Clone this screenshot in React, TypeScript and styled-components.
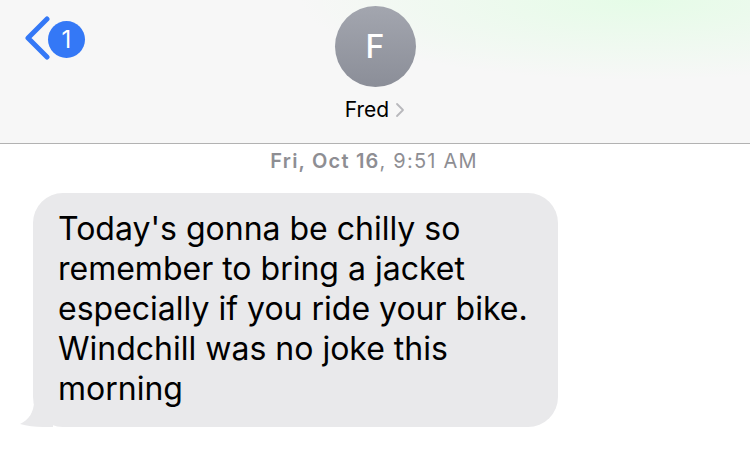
import React from "react";
import styled, { createGlobalStyle } from "styled-components";

const Global = createGlobalStyle`
  html, body { margin: 0; padding: 0; background: #ffffff; }
  body { font-family: Inter, "Liberation Sans", Arial, sans-serif; -webkit-font-smoothing: antialiased; }
  #root { width: 750px; height: 449px; overflow: hidden; }
`;

const Screen = styled.div`
  width: 750px;
  height: 449px;
  display: flex;
  flex-direction: column;
  background: #ffffff;
`;

const NavBar = styled.header`
  height: 144px;
  box-sizing: border-box;
  border-bottom: 1px solid #b2b2b2;
  background:
    radial-gradient(ellipse 340px 80px at 640px 0px, rgba(228, 252, 230, 0.95), rgba(240, 250, 241, 0) 100%),
    #f7f7f7;
  display: grid;
  grid-template-columns: 1fr auto 1fr;
  align-items: start;
`;

const BackButton = styled.div`
  display: flex;
  align-items: center;
  padding: 16px 0 0 24px;
`;

const Badge = styled.div`
  width: 37px;
  height: 37px;
  border-radius: 50%;
  background: #3478f6;
  color: #ffffff;
  font-size: 24px;
  line-height: 37px;
  text-align: center;
  margin-left: -2px;
  margin-top: 2px;
`;

const Contact = styled.div`
  display: flex;
  flex-direction: column;
  align-items: center;
  padding-top: 6px;
`;

const Avatar = styled.div`
  width: 81px;
  height: 81px;
  border-radius: 50%;
  background: linear-gradient(180deg, #a3a6af 0%, #8b8e98 100%);
  color: #ffffff;
  font-size: 32px;
  font-weight: 500;
  display: flex;
  align-items: center;
  justify-content: center;
`;

const NameRow = styled.div`
  display: flex;
  align-items: center;
  gap: 6px;
  margin-top: 10px;
  font-size: 21px;
  color: #000000;
  line-height: 26px;
`;

const Thread = styled.main`
  display: flex;
  flex-direction: column;
  align-items: flex-start;
  padding: 5px 0 0 0;
`;

const Stamp = styled.div`
  align-self: center;
  font-size: 20px;
  letter-spacing: 1.2px;
  color: #8e8e93;
  line-height: 24px;
  margin-left: -2px;
  b { font-weight: 600; }
`;

const Bubble = styled.div`
  position: relative;
  margin: 20px 0 0 33px;
  width: 525px;
  box-sizing: border-box;
  padding: 16px 24px 18px 25px;
  background: #e9e9eb;
  border-radius: 30px;
  color: #000000;
  font-size: 32px;
  line-height: 40px;
`;

const Tail = styled.svg`
  position: absolute;
  left: -14px;
  bottom: 0;
`;

const Chevron = () => (
  <svg width="26" height="44" viewBox="0 0 26 44">
    <path d="M23 3 L4 22 L23 41" fill="none" stroke="#3478f6" strokeWidth="5" strokeLinecap="round" strokeLinejoin="round" />
  </svg>
);

const SmallChevron = () => (
  <svg width="10" height="16" viewBox="0 0 10 16">
    <path d="M2 2 L8 8 L2 14" fill="none" stroke="#b8b8bc" strokeWidth="1.8" strokeLinecap="round" strokeLinejoin="round" />
  </svg>
);

export default function App() {
  return (
    <Screen>
      <Global />
      <NavBar>
        <BackButton>
          <Chevron />
          <Badge>1</Badge>
        </BackButton>
        <Contact>
          <Avatar>F</Avatar>
          <NameRow>
            <span>Fred</span>
            <SmallChevron />
          </NameRow>
        </Contact>
        <div />
      </NavBar>
      <Thread>
        <Stamp>
          <b>Fri, Oct 16</b>, 9:51 AM
        </Stamp>
        <Bubble>
          Today's gonna be chilly so remember to bring a jacket especially if you ride your bike. Windchill was no joke this morning
          <Tail width="34" height="26" viewBox="0 0 34 26">
            <path d="M34 0 L34 26 L24 26 C16 26 8 25 1 23 C10 19 15 11 15 0 Z" fill="#e9e9eb" />
          </Tail>
        </Bubble>
      </Thread>
    </Screen>
  );
}
